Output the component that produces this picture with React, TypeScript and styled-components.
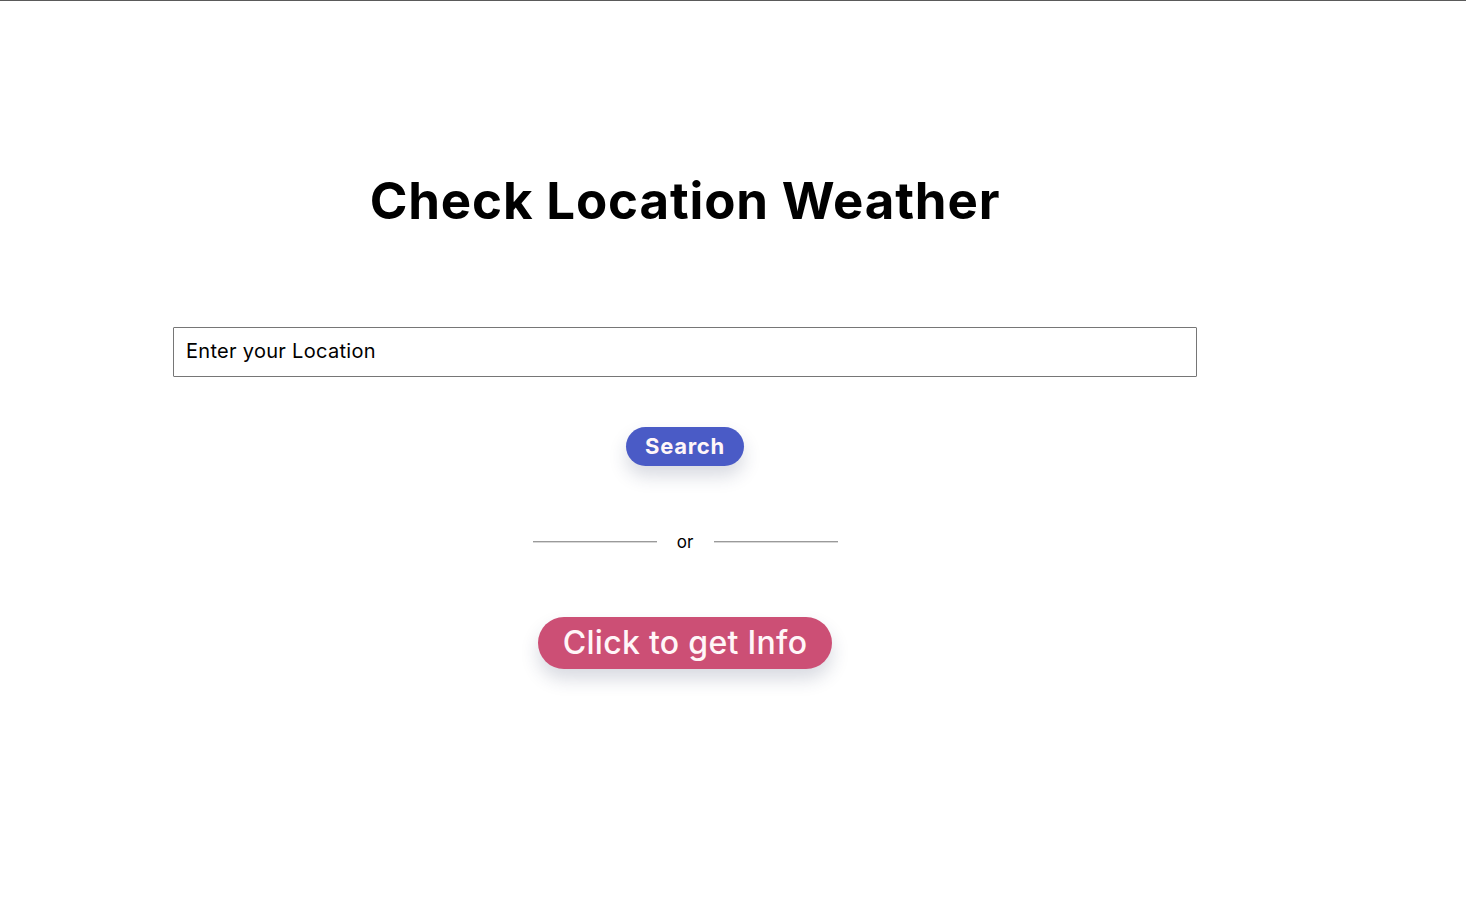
import React from "react";
import styled, { createGlobalStyle } from "styled-components";

const Global = createGlobalStyle`
  html, body { margin: 0; padding: 0; background: #ffffff; }
  body { font-family: Inter, "Open Sans", sans-serif; color: #000; }
`;

const Page = styled.div`
  border-top: 1px solid #5a5a5a;
  min-height: 902px;
  box-sizing: border-box;
`;

const Column = styled.main`
  width: 1024px;
  margin-left: 173px;
  display: flex;
  flex-direction: column;
  align-items: center;
`;

const Title = styled.h1`
  margin: 169px 0 0;
  font-family: Inter, sans-serif;
  font-weight: 700;
  font-size: 51px;
  line-height: 62px;
  letter-spacing: 0.85px;
  color: #000;
`;

const Input = styled.input`
  margin-top: 95px;
  width: 100%;
  height: 50px;
  box-sizing: border-box;
  border: 1px solid #767676;
  border-radius: 1px;
  padding: 0 12px 3px;
  font-family: Inter, sans-serif;
  font-size: 20px;
  letter-spacing: 0.3px;
  color: #000;
  outline: none;
  &::placeholder { color: #000; opacity: 1; }
`;

const Pill = styled.button<{ $bg: string }>`
  border: none;
  border-radius: 999px;
  background: ${(p) => p.$bg};
  color: #fff6f8;
  font-family: Inter, sans-serif;
  cursor: pointer;
  box-shadow: 0 10px 18px rgba(40, 50, 90, 0.18);
`;

const SearchButton = styled(Pill)`
  margin-top: 50px;
  width: 118px;
  height: 39px;
  font-size: 22px;
  font-weight: 700;
  letter-spacing: 0.7px;
  padding: 0 0 1px;
`;

const Divider = styled.div`
  margin-top: 65px;
  display: flex;
  align-items: center;
  gap: 20px;
`;

const Line = styled.span`
  display: block;
  width: 124px;
  height: 2px;
  background: #9a9a9a;
  border-bottom: 1px solid #d8d8d8;
  box-sizing: border-box;
`;

const Or = styled.span`
  font-family: Inter, sans-serif;
  font-size: 17px;
  line-height: 20px;
  padding-top: 1px;
  width: 17px;
  text-align: center;
`;

const InfoButton = styled(Pill)`
  margin-top: 65px;
  width: 294px;
  height: 52px;
  font-size: 32px;
  font-weight: 500;
  letter-spacing: 0.3px;
  padding: 0 0 2px;
`;

export default function App() {
  return (
    <Page>
      <Global />
      <Column>
        <Title>Check Location Weather</Title>
        <Input placeholder="Enter your Location" />
        <SearchButton $bg="#4a5bc6">Search</SearchButton>
        <Divider>
          <Line />
          <Or>or</Or>
          <Line />
        </Divider>
        <InfoButton $bg="#cc4f75">Click to get Info</InfoButton>
      </Column>
    </Page>
  );
}
